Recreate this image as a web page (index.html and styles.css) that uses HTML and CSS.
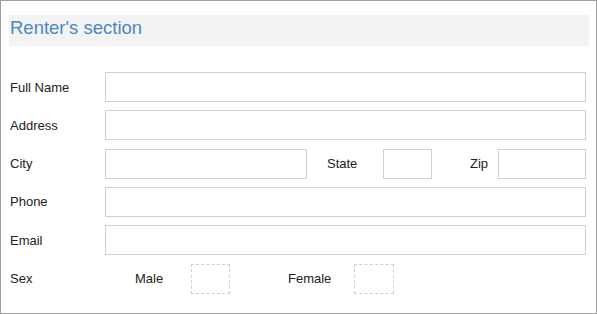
FILE: index.html
```html
<!DOCTYPE html>
<html lang="en">
<head>
    <meta charset="UTF-8">
    <meta name="viewport" content="width=device-width, initial-scale=1.0">
    <title>Renter's section</title>
    <link rel="stylesheet" href="styles.css">
</head>
<body>
    <div class="panel">
        <h2 class="section-title">Renter's section</h2>

        <div class="rows">
            <div class="row">
                <label class="label" for="full_name">Full Name</label>
                <input class="field" type="text" id="full_name">
            </div>
            <div class="row">
                <label class="label" for="address">Address</label>
                <input class="field" type="text" id="address">
            </div>
            <div class="row">
                <label class="label" for="city">City</label>
                <input class="field city" type="text" id="city">
                <label class="state-label" for="state">State</label>
                <input class="field state" type="text" id="state">
                <label class="zip-label" for="zip">Zip</label>
                <input class="field zip" type="text" id="zip">
            </div>
            <div class="row">
                <label class="label" for="phone">Phone</label>
                <input class="field" type="text" id="phone">
            </div>
            <div class="row">
                <label class="label" for="email">Email</label>
                <input class="field" type="text" id="email">
            </div>
            <div class="row">
                <span class="label">Sex</span>
                <span class="male-label">Male</span>
                <div class="check male"></div>
                <span class="female-label">Female</span>
                <div class="check female"></div>
            </div>
        </div>
    </div>
</body>
</html>
```

FILE: styles.css
```css
body {
    margin: 0;
    font-family: "Liberation Sans", Arial, sans-serif;
    background: white;
}
.panel {
    width: 597px;
    height: 314px;
    box-sizing: border-box;
    border: 1px solid #a0a0a0;
    padding: 14px 7px 0 8px;
}
.section-title {
    margin: 0;
    height: 31px;
    line-height: 25px;
    padding-left: 1px;
    background: #f3f3f3;
    color: #4a88c2;
    font-size: 18.5px;
    font-weight: normal;
}
.rows {
    display: flex;
    flex-direction: column;
    gap: 8.33px;
    margin-top: 26px;
    padding: 0 3px 0 1px;
}
.row {
    display: flex;
    align-items: center;
    height: 30px;
    font-size: 13px;
    color: #222;
}
.label {
    width: 95px;
    flex-shrink: 0;
}
.field {
    flex: 1;
    height: 30px;
    box-sizing: border-box;
    margin: 0;
    border: 1px solid #d0d0d0;
    padding: 0 6px;
    font-size: 13px;
    min-width: 0;
}
.city {
    flex: none;
    width: 202px;
}
.state-label {
    margin-left: 20px;
    width: 56px;
}
.state {
    flex: none;
    width: 49px;
}
.zip-label {
    margin-left: 38px;
    width: 28px;
}
.male-label {
    margin-left: 30px;
    width: 56px;
}
.female-label {
    margin-left: 58px;
    width: 66px;
}
.check {
    width: 39px;
    height: 30px;
    box-sizing: border-box;
    border: 1px dashed #cfcfcf;
}
.female {
    width: 40px;
}
```
